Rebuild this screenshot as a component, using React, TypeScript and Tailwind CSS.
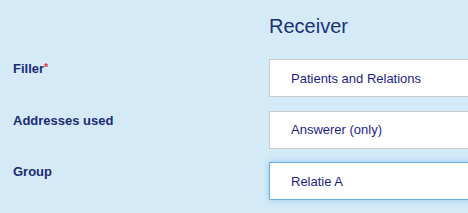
import React from 'react';

interface FieldRow {
  label: string;
  value: string;
  required?: boolean;
  focused?: boolean;
}

const rows: FieldRow[] = [
  { label: 'Filler', value: 'Patients and Relations', required: true },
  { label: 'Addresses used', value: 'Answerer (only)' },
  { label: 'Group', value: 'Relatie A', focused: true },
];

const App: React.FC = () => {
  return (
    <div
      className="w-[468px] h-[213px] overflow-hidden bg-[#d4ebf7] text-[#1b2a78]"
      style={{ fontFamily: '"Liberation Sans", Arial, sans-serif' }}
    >
      {/* Heading */}
      <div className="pl-[269px] pt-[14px] h-[59px]">
        <h2 className="text-[20px] leading-[24px] text-[#1c2f78]">Receiver</h2>
      </div>

      {/* Form rows */}
      <div className="flex flex-col gap-[13.5px]">
        {rows.map((row, index) => (
          <div key={index} className="flex items-start">
            <div className="w-[269px] shrink-0 pl-[13px] pt-[2px] text-[13px] leading-[15px] font-bold">
              {row.label}
              {row.required && (
                <span className="text-[#e8333a] text-[11px] font-bold relative -top-[1px] align-top">*</span>
              )}
            </div>
            <div
              className={`w-[220px] shrink-0 h-[38px] flex items-center pl-[21px] bg-white text-[13px] leading-[15px] text-[#1e1e8a] border ${
                row.focused
                  ? 'border-[#66afe9] shadow-[0_0_6px_rgba(102,175,233,0.6)]'
                  : 'border-[#cccccc]'
              }`}
            >
              {row.value}
            </div>
          </div>
        ))}
      </div>
    </div>
  );
};

export default App;
